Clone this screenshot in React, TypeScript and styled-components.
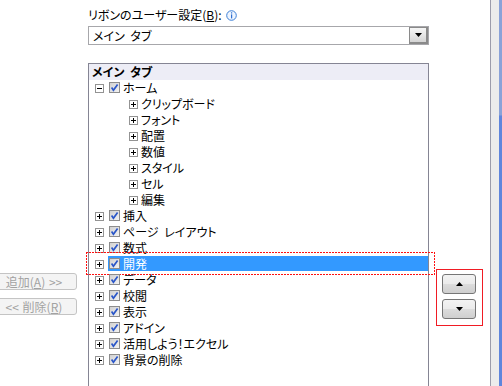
import * as React from 'react';
import styled, { createGlobalStyle } from 'styled-components';

const Global = createGlobalStyle`
    html, body {
        margin: 0;
        padding: 0;
        background: #fff;
    }
    body {
        font-family: "Noto Sans CJK JP", "Noto Sans", sans-serif;
        font-size: 12px;
        color: #000;
        font-feature-settings: "palt";
        word-spacing: 3px;
    }
`;

const Screen = styled.div`
    width: 502px;
    height: 386px;
    overflow: hidden;
    display: grid;
    grid-template-columns: 88px 341px 61px 12px;
`;

const LeftCol = styled.div`
    display: flex;
    flex-direction: column;
    gap: 8px;
    padding-top: 273px;
`;

const MoveButton = styled.div`
    box-sizing: border-box;
    width: 86px;
    height: 17px;
    margin-left: -9px;
    border: 1px solid #c4c4c4;
    border-radius: 3px;
    background: #f4f4f4;
    color: #a2a2a2;
    line-height: 15px;
    text-align: center;
    white-space: nowrap;
    word-spacing: 1px;
    u { text-decoration: underline; }
`;

const CenterCol = styled.div`
    display: flex;
    flex-direction: column;
    padding-top: 7px;
`;

const Label = styled.div`
    height: 16px;
    line-height: 16px;
    display: flex;
    align-items: center;
    gap: 4px;
    white-space: nowrap;
`;

const Combo = styled.div`
    box-sizing: border-box;
    margin-top: 3px;
    height: 19px;
    border: 1px solid #a7a7ab;
    display: flex;
    align-items: stretch;
`;

const ComboText = styled.div`
    flex: 1;
    padding-left: 4px;
    line-height: 17px;
`;

const ComboButton = styled.div`
    box-sizing: border-box;
    width: 19px;
    border: 1px solid #8a8a8a;
    border-right-width: 2px;
    border-bottom-width: 2px;
    background: linear-gradient(#f6f6f6, #e6e6e6 50%, #d4d4d4);
    display: flex;
    align-items: center;
    justify-content: center;
`;

const Tree = styled.div`
    box-sizing: border-box;
    margin-top: 18px;
    height: 420px;
    flex-shrink: 0;
    border: 1px solid #858594;
`;

const TreeHead = styled.div`
    height: 16px;
    line-height: 16px;
    padding-left: 3px;
    background: #ededf6;
    font-weight: bold;
`;

const Row = styled.div<{ $level: number }>`
    position: relative;
    height: 16px;
    display: flex;
    align-items: flex-start;
    padding-left: ${p => (p.$level === 0 ? 6 : 40)}px;
`;

const Expander = styled.span`
    box-sizing: border-box;
    width: 9px;
    height: 9px;
    margin-top: 4px;
    border: 1px solid #939393;
    background: #fff;
    position: relative;
    flex-shrink: 0;
`;

const ItemBody = styled.div<{ $selected?: boolean; $level: number }>`
    flex: 1;
    height: 15px;
    display: flex;
    align-items: flex-start;
    gap: 3px;
    margin-left: ${p => (p.$level === 0 ? 4 : 3)}px;
    padding-left: ${p => (p.$level === 0 ? 1 : 0)}px;
    background: ${p => (p.$selected ? '#3399ff' : 'transparent')};
    color: ${p => (p.$selected ? '#fff' : '#000')};
    line-height: 15px;
    white-space: nowrap;
`;

const Box = styled.span`
    display: flex;
    margin-top: 2px;
`;

const FocusMark = styled.span`
    position: absolute;
    left: -3px;
    right: -7px;
    top: -4px;
    bottom: -3px;
    pointer-events: none;
    background:
        repeating-linear-gradient(90deg, #ff1010 0 2px, transparent 2px 3px) top / 100% 1px no-repeat,
        repeating-linear-gradient(90deg, #ff1010 0 2px, transparent 2px 3px) bottom / 100% 1px no-repeat,
        repeating-linear-gradient(180deg, #ff1010 0 2px, transparent 2px 3px) left / 1px 100% no-repeat,
        repeating-linear-gradient(180deg, #ff1010 0 2px, transparent 2px 3px) right / 1px 100% no-repeat;
`;

const RightCol = styled.div`
    padding-top: 269px;
    padding-left: 7px;
`;

const OrderBox = styled.div`
    box-sizing: border-box;
    width: 47px;
    height: 57px;
    border: 1px solid #f01c24;
    padding: 4px 0 0 5px;
    display: flex;
    flex-direction: column;
    gap: 5px;
`;

const ArrowButton = styled.div`
    box-sizing: border-box;
    width: 34px;
    height: 20px;
    border: 1px solid #767676;
    border-radius: 3px;
    background: linear-gradient(#f3f3f3, #ebebeb 48%, #dcdcdc 52%, #cfcfcf);
    display: flex;
    align-items: center;
    justify-content: center;
`;

const Edge = styled.div`
    border-left: 1px solid #9c9cab;
    background: #ececec;
    display: flex;
    justify-content: flex-end;
`;

const EdgeStrip = styled.div`
    width: 3px;
    background: linear-gradient(#8aa2d8 0, #8aa2d8 115px, #5f85dc 116px, #5f85dc);
`;

const Check = () => (
    <svg width="11" height="11" viewBox="0 0 11 11">
        <defs>
            <linearGradient id="cb" x1="0" y1="0" x2="1" y2="1">
                <stop offset="0" stopColor="#cfcfcf" />
                <stop offset="1" stopColor="#f4f4f4" />
            </linearGradient>
        </defs>
        <rect x="0.5" y="0.5" width="10" height="10" fill="url(#cb)" stroke="#8d8d8d" />
        <path d="M2.6 5.6 L4.4 8.2 L8.6 2.4" fill="none" stroke="#2a56c8" strokeWidth="1.7" />
    </svg>
);

const Plus = ({ open }: { open?: boolean }) => (
    <svg width="7" height="7" viewBox="0 0 7 7" style={{ position: 'absolute', left: 0, top: 0 }}>
        <rect x="1" y="3" width="5" height="1" fill="#000" />
        {!open && <rect x="3" y="1" width="1" height="5" fill="#000" />}
    </svg>
);

const Info = () => (
    <svg width="11" height="11" viewBox="0 0 11 11">
        <circle cx="5.5" cy="5.5" r="4.8" fill="#eef5ff" stroke="#3c7fd6" />
        <rect x="5" y="2.3" width="1.2" height="1.2" fill="#2f6fd0" />
        <rect x="5" y="4.4" width="1.2" height="4" fill="#2f6fd0" />
    </svg>
);

const Tri = ({ up }: { up?: boolean }) => (
    <svg width="7" height="4" viewBox="0 0 7 4">
        <path d={up ? 'M0 4 L3.5 0 L7 4 Z' : 'M0 0 L7 0 L3.5 4 Z'} fill="#000" />
    </svg>
);

const homeGroups = ['クリップボード', 'フォント', '配置', '数値', 'スタイル', 'セル', '編集'];
const tabs = ['挿入', 'ページ レイアウト', '数式', '開発', 'データ', '校閲', '表示', 'アドイン', '活用しよう！エクセル', '背景の削除'];

export default function App() {
    return (
        <>
            <Global />
            <Screen>
                <LeftCol>
                    <MoveButton>追加(<u>A</u>) &gt;&gt;</MoveButton>
                    <MoveButton>&lt;&lt; 削除(<u>R</u>)</MoveButton>
                </LeftCol>
                <CenterCol>
                    <Label>
                        <span>リボンのユーザー設定(<u>B</u>):</span>
                        <Info />
                    </Label>
                    <Combo>
                        <ComboText>メイン タブ</ComboText>
                        <ComboButton><Tri /></ComboButton>
                    </Combo>
                    <Tree>
                        <TreeHead>メイン タブ</TreeHead>
                        <Row $level={0}>
                            <Expander><Plus open /></Expander>
                            <ItemBody $level={0}>
                                <Box><Check /></Box>
                                ホーム
                            </ItemBody>
                        </Row>
                        {homeGroups.map(g => (
                            <Row key={g} $level={1}>
                                <Expander><Plus /></Expander>
                                <ItemBody $level={1}>{g}</ItemBody>
                            </Row>
                        ))}
                        {tabs.map(t => (
                            <Row key={t} $level={0}>
                                <Expander><Plus /></Expander>
                                <ItemBody $level={0} $selected={t === '開発'}>
                                    <Box><Check /></Box>
                                    {t}
                                </ItemBody>
                                {t === '開発' && <FocusMark />}
                            </Row>
                        ))}
                    </Tree>
                </CenterCol>
                <RightCol>
                    <OrderBox>
                        <ArrowButton><Tri up /></ArrowButton>
                        <ArrowButton><Tri /></ArrowButton>
                    </OrderBox>
                </RightCol>
                <Edge>
                    <EdgeStrip />
                </Edge>
            </Screen>
        </>
    );
}
